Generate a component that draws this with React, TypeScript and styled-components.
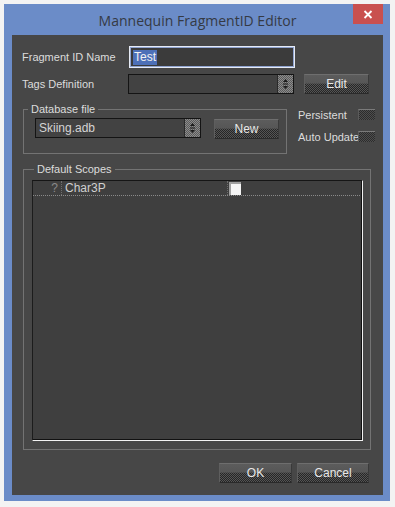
import React from "react";
import styled, { createGlobalStyle } from "styled-components";

const Global = createGlobalStyle`
  html, body { margin: 0; padding: 0; background: #f3f3f3; }
  body { font-family: "Liberation Sans", Arial, sans-serif; }
`;

const Screen = styled.div`
  width: 395px;
  height: 507px;
  box-sizing: border-box;
  padding: 4px 5px 6px 4px;
`;

const Window = styled.div`
  height: 100%;
  box-sizing: border-box;
  background: #6b8cc8;
  padding: 0 7px 6px 8px;
  display: flex;
  flex-direction: column;
`;

const TitleBar = styled.div`
  height: 31px;
  display: grid;
  grid-template-columns: 1fr auto 1fr;
  align-items: start;
`;

const Title = styled.div`
  grid-column: 2;
  align-self: center;
  font-family: "Open Sans", "Noto Sans", sans-serif;
  font-size: 14px;
  color: #353a44;
  padding-top: 1px;
`;

const CloseButton = styled.div`
  grid-column: 3;
  justify-self: end;
  width: 30px;
  height: 20px;
  background: #c9504f;
  display: flex;
  align-items: center;
  justify-content: center;
`;

const Content = styled.div`
  height: 460px;
  box-sizing: border-box;
  background: #474747;
  padding: 11px 14px 12px 10px;
  display: flex;
  flex-direction: column;
  font-size: 11px;
  color: #dcdcdc;
`;

const Row = styled.div<{ $mt?: number }>`
  display: flex;
  align-items: center;
  margin-top: ${(p) => p.$mt ?? 0}px;
`;

const Label = styled.div<{ $w: number }>`
  width: ${(p) => p.$w}px;
  flex: none;
  color: #dcdcdc;
  font-size: 11px;
  white-space: nowrap;
`;

const NameInput = styled.div`
  width: 166px;
  height: 22px;
  box-sizing: border-box;
  border: 1px solid #e6ebf5;
  box-shadow: inset 0 0 0 1px #8fa3d0;
  background: #3b3b3b;
  padding: 2px 3px;
  display: flex;
  align-items: center;
  flex: none;
`;

const Selected = styled.span`
  background: #4d70b8;
  color: #f2f2f2;
  font-size: 12px;
  line-height: 15px;
  padding: 0 1px;
`;

const Combo = styled.div`
  width: 166px;
  height: 20px;
  box-sizing: border-box;
  border: 1px solid #141414;
  background: #424242;
  display: flex;
  align-items: stretch;
  justify-content: space-between;
  flex: none;
`;

const ComboValue = styled.div`
  padding-left: 3px;
  font-size: 12px;
  color: #d4d4d4;
  display: flex;
  align-items: center;
`;

const Spin = styled.div`
  width: 15px;
  background: repeating-conic-gradient(#5a5a5a 0 25%, #8c8c8c 0 50%) 0 0 / 2px 2px;
  border-left: 1px solid #2a2a2a;
  display: flex;
  align-items: center;
  justify-content: center;
`;

const Button = styled.div<{ $w: number; $ml?: number; $mt?: number }>`
  width: ${(p) => p.$w}px;
  height: 20px;
  box-sizing: border-box;
  margin-left: ${(p) => p.$ml ?? 0}px;
  margin-top: ${(p) => p.$mt ?? 0}px;
  flex: none;
  border-top: 1px solid #6e6e6e;
  border-left: 1px solid #5e5e5e;
  border-right: 1px solid #3a3a3a;
  border-bottom: 1px solid #2a2a2a;
  background:
    linear-gradient(#5c5c5c, #565656) top / 100% 48% no-repeat,
    repeating-conic-gradient(#262626 0 25%, #555 0 50%) 0 0 / 2px 2px;
  color: #e8e8e8;
  font-size: 12px;
  display: flex;
  align-items: center;
  justify-content: center;
`;

const Group = styled.fieldset<{ $w: number; $pad: string; $mt?: number }>`
  margin: ${(p) => p.$mt ?? 0}px 0 0 1px;
  min-inline-size: 0;
  flex: none;
  box-sizing: border-box;
  width: ${(p) => p.$w}px;
  border: 1px solid #737373;
  padding: ${(p) => p.$pad};
`;

const Legend = styled.legend<{ $ml: number }>`
  padding: 0 3px;
  margin-left: ${(p) => p.$ml}px;
  font-size: 11px;
  line-height: 14px;
  color: #dcdcdc;
`;

const GroupRow = styled.div<{ $mt?: number }>`
  display: flex;
  align-items: flex-start;
  margin-top: ${(p) => p.$mt ?? 0}px;
`;

const Options = styled.div`
  flex: none;
  margin-left: 11px;
  margin-top: 7px;
  display: grid;
  grid-template-columns: 60px 17px;
  grid-auto-rows: 11px;
  row-gap: 11px;
  align-items: center;
`;

const OptionLabel = styled.div`
  white-space: nowrap;
  font-size: 11px;
  color: #dcdcdc;
`;

const SmallCheck = styled.div`
  width: 17px;
  height: 11px;
  box-sizing: border-box;
  border-top: 1px solid #7a7a7a;
  border-left: 1px solid #5a5a5a;
  background: repeating-conic-gradient(#2c2c2c 0 25%, #4e4e4e 0 50%) 0 0 / 2px 2px;
`;

const List = styled.div`
  height: 261px;
  box-sizing: border-box;
  border-top: 1px solid #151515;
  border-left: 1px solid #1c1c1c;
  border-right: 1px solid #f2f2f2;
  border-bottom: 1px solid #f2f2f2;
  box-shadow: inset -1px -1px 0 #111;
  background: #3f3f3f;
`;

const ListRow = styled.div`
  display: grid;
  grid-template-columns: 29px 166px 1fr;
  height: 15px;
  box-sizing: border-box;
  border-bottom: 1px dotted #8a8a8a;
  margin-right: 2px;
`;

const Cell = styled.div<{ $align?: string; $color?: string }>`
  display: flex;
  align-items: center;
  justify-content: ${(p) => p.$align ?? "flex-start"};
  padding: 0 3px;
  border-right: 1px dotted #6e6e6e;
  color: ${(p) => p.$color ?? "#d0d0d0"};
  font-size: 12px;
`;

const EndCell = styled.div`
  display: flex;
  align-items: center;
  padding-left: 1px;
`;

const WhiteCheck = styled.div`
  width: 12px;
  height: 13px;
  box-sizing: border-box;
  background: #f5f5f5;
  border-top: 2px solid #a0a0a0;
  border-left: 2px solid #a0a0a0;
  margin-top: 1px;
`;

const Footer = styled.div`
  margin-top: 13px;
  display: flex;
  justify-content: flex-end;
  gap: 5px;
`;

const SpinArrows = () => (
  <svg width="9" height="12" viewBox="0 0 9 12">
    <path d="M4.5 1 L7 4 H2 Z" fill="#1c1c1c" />
    <path d="M2 6 H7" stroke="#1c1c1c" strokeWidth="1" />
    <path d="M4.5 11 L7 8 H2 Z" fill="#1c1c1c" />
  </svg>
);

export default function App() {
  return (
    <Screen>
      <Global />
      <Window>
        <TitleBar>
          <Title>Mannequin FragmentID Editor</Title>
          <CloseButton>
            <svg width="10" height="9" viewBox="0 0 10 9">
              <path d="M1.5 1 L8.5 8 M8.5 1 L1.5 8" stroke="#fff" strokeWidth="1.8" />
            </svg>
          </CloseButton>
        </TitleBar>
        <Content>
          <Row>
            <Label $w={107}>Fragment ID Name</Label>
            <NameInput>
              <Selected>Test</Selected>
            </NameInput>
          </Row>
          <Row $mt={6}>
            <Label $w={106}>Tags Definition</Label>
            <Combo>
              <ComboValue />
              <Spin>
                <SpinArrows />
              </Spin>
            </Combo>
            <Button $w={65} $ml={10}>Edit</Button>
          </Row>
          <GroupRow $mt={8}>
            <Group $w={264} $pad="2px 7px 14px 11px">
              <Legend $ml={-7}>Database file</Legend>
              <GroupRow>
                <Combo>
                  <ComboValue>Skiing.adb</ComboValue>
                  <Spin>
                    <SpinArrows />
                  </Spin>
                </Combo>
                <Button $w={65} $ml={13} $mt={1}>New</Button>
              </GroupRow>
            </Group>
            <Options>
              <OptionLabel>Persistent</OptionLabel>
              <SmallCheck />
              <OptionLabel>Auto Update</OptionLabel>
              <SmallCheck />
            </Options>
          </GroupRow>
          <Group $w={348} $pad="4px 7px 8px 8px" $mt={8}>
            <Legend $ml={2}>Default Scopes</Legend>
            <List>
              <ListRow>
                <Cell $align="flex-end" $color="#8a8a8a">?</Cell>
                <Cell>Char3P</Cell>
                <EndCell>
                  <WhiteCheck />
                </EndCell>
              </ListRow>
            </List>
          </Group>
          <Footer>
            <Button $w={73}>OK</Button>
            <Button $w={72}>Cancel</Button>
          </Footer>
        </Content>
      </Window>
    </Screen>
  );
}
